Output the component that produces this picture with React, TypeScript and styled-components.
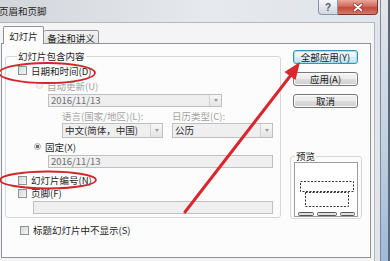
import React from 'react';
import styled, { createGlobalStyle } from 'styled-components';

const GlobalStyle = createGlobalStyle`
  html, body {
    margin: 0;
    padding: 0;
    background: #f3f3f3;
  }
  body {
    font-family: "Noto Sans CJK SC", "Noto Sans", sans-serif;
    font-size: 9.5px;
    color: #1e1e1e;
  }
`;

const Screen = styled.div`
  position: relative;
  width: 390px;
  height: 261px;
  overflow: hidden;
  display: flex;
`;

const Window = styled.div`
  width: 381px;
  display: flex;
  flex-direction: column;
  background: linear-gradient(to right, #d2d6da, #e6e9ed 55%, #dfe5eb);
  border-right: 1px solid #7d8a98;
  box-sizing: border-box;
`;

const Backdrop = styled.div`
  flex: 1;
  background: linear-gradient(#e4e6e9, #c9d6e3 45%, #9dbad7);
  border-right: 2px solid #5a6878;
`;

const TitleBar = styled.div`
  height: 22px;
  display: flex;
  align-items: flex-start;
`;

const Title = styled.div`
  margin: 5px 0 0 -1px;
  line-height: 13px;
  color: #222;
`;

const Caption = styled.div`
  margin: 0 2px 0 auto;
  display: flex;
`;

const CaptionButton = styled.div<{ $close?: boolean }>`
  width: ${p => (p.$close ? 40 : 20)}px;
  height: 15px;
  box-sizing: border-box;
  display: flex;
  align-items: center;
  justify-content: center;
  border: 1px solid ${p => (p.$close ? '#7a3530' : '#8b96a3')};
  border-left-width: ${p => (p.$close ? 0 : 1)}px;
  border-radius: ${p => (p.$close ? '0 0 4px 0' : '0 0 0 4px')};
  border-top: none;
  background: ${p =>
    p.$close
      ? 'linear-gradient(#eaa79c, #d26a5c 45%, #c24a3b 55%, #d77a66)'
      : 'linear-gradient(#f6f8fa, #e3e7ec 50%, #d3d9e0)'};
  color: #4d5a6b;
  font-family: "Liberation Sans", sans-serif;
  font-size: 10px;
  font-weight: bold;
`;

const Client = styled.div`
  flex: 1;
  margin-right: 5px;
  background: #f4f4f4;
  border-top: 1px solid #b4b7bb;
  border-right: 1px solid #b4b7bb;
  padding: 3px 0 3px 1px;
  display: flex;
  flex-direction: column;
`;

const TabStrip = styled.div`
  height: 18px;
  display: flex;
  align-items: flex-end;
  padding-left: 2px;
  margin-bottom: -1px;
  position: relative;
  z-index: 1;
`;

const Tab = styled.div<{ $active?: boolean }>`
  height: ${p => (p.$active ? 18 : 14)}px;
  width: ${p => (p.$active ? 41 : 55)}px;
  box-sizing: border-box;
  border: 1px solid #8e9197;
  border-bottom: ${p => (p.$active ? 'none' : '1px solid #8e9197')};
  border-left-width: ${p => (p.$active ? 1 : 0)}px;
  border-radius: 2px 2px 0 0;
  background: ${p => (p.$active ? '#fcfcfc' : 'linear-gradient(#f3f3f3, #e4e4e4)')};
  display: flex;
  align-items: center;
  justify-content: center;
  line-height: 12px;
  padding-top: ${p => (p.$active ? 0 : 1)}px;
`;

const Panel = styled.div`
  flex: 1;
  margin-right: 3px;
  border: 1px solid #8e9197;
  background: #fcfcfc;
  display: flex;
`;

const LeftCol = styled.div`
  margin-left: 3px;
  width: 276px;
  display: flex;
  flex-direction: column;
`;

const Group = styled.fieldset<{ $pad: string }>`
  margin: 0;
  min-width: 0;
  padding: ${p => p.$pad};
  border: 1px solid #d3d8dc;
  border-radius: 3px;
  display: flex;
  flex-direction: column;
`;

const Legend = styled.legend<{ $ml: number }>`
  padding: 0 1px;
  margin-left: ${p => p.$ml}px;
  line-height: 12px;
  color: #1e1e1e;
`;

const Option = styled.div<{ $h: number; $mt?: number; $ml?: number; $muted?: boolean }>`
  height: ${p => p.$h}px;
  margin-top: ${p => p.$mt ?? 0}px;
  margin-left: ${p => p.$ml ?? 0}px;
  display: flex;
  align-items: center;
  line-height: 12px;
  white-space: nowrap;
  color: ${p => (p.$muted ? '#a3a3a3' : '#1e1e1e')};
`;

const Check = styled.span`
  width: 9px;
  height: 9px;
  box-sizing: border-box;
  border: 1px solid #8f9294;
  background: linear-gradient(135deg, #d4d6d8, #f6f7f8);
  margin-right: 4px;
  flex: none;
`;

const Radio = styled.span<{ $on?: boolean; $faint?: boolean }>`
  width: 7px;
  height: 7px;
  box-sizing: border-box;
  border-radius: 50%;
  border: 1px solid ${p => (p.$faint ? '#d8d8d8' : '#a9a9a9')};
  background: ${p =>
    p.$on ? 'radial-gradient(circle, #6c6c6c 0 1.4px, #eeeeee 1.9px)' : '#f4f4f4'};
  margin-right: 4px;
  flex: none;
`;

const Field = styled.div<{ $w: number; $ml: number; $mt?: number; $h?: number; $dark?: boolean }>`
  width: ${p => p.$w}px;
  height: ${p => p.$h ?? 13}px;
  margin-left: ${p => p.$ml}px;
  margin-top: ${p => p.$mt ?? 0}px;
  box-sizing: border-box;
  border: 1px solid #bdbfc2;
  background: #efefef;
  display: flex;
  align-items: center;
  padding-left: 2px;
  line-height: 11px;
  color: ${p => (p.$dark ? '#2a2a2a' : '#6e6e6e')};
  white-space: nowrap;
  flex: none;
`;

const FieldText = styled.span`
  flex: 1;
`;

const DropButton = styled.span`
  width: 12px;
  align-self: stretch;
  box-sizing: border-box;
  border-left: 1px solid #cfd1d3;
  background: linear-gradient(#f7f7f7, #e4e4e4);
  display: flex;
  align-items: center;
  justify-content: center;

  &::after {
    content: '';
    border-left: 2.5px solid transparent;
    border-right: 2.5px solid transparent;
    border-top: 3px solid #9a9a9a;
  }
`;

const Pair = styled.div<{ $h: number }>`
  height: ${p => p.$h}px;
  margin-left: 44px;
  display: flex;
  align-items: center;
  gap: 9px;
`;

const Caption2 = styled.span<{ $w?: number }>`
  width: ${p => (p.$w ? `${p.$w}px` : 'auto')};
  color: #a3a3a3;
  line-height: 12px;
  padding-top: 1px;
  white-space: nowrap;
`;

const RightCol = styled.div`
  margin-left: 9px;
  width: 72px;
  padding-top: 6px;
  display: flex;
  flex-direction: column;
`;

const Button = styled.div<{ $default?: boolean }>`
  margin-left: 3px;
  margin-bottom: 8px;
  width: 65px;
  height: 14px;
  box-sizing: border-box;
  border: 1px solid ${p => (p.$default ? '#3f8fb5' : '#767676')};
  border-radius: 3px;
  box-shadow: ${p => (p.$default ? 'inset 0 0 0 1px #9fe2f2' : 'inset 0 0 0 1px #fbfbfb')};
  background: ${p =>
    p.$default
      ? 'linear-gradient(#f3fafd, #e4f4fb 50%, #d2ecf8 50%, #c6e6f5)'
      : 'linear-gradient(#f4f4f4, #ebebeb 50%, #dddddd 50%, #d0d0d0)'};
  display: flex;
  align-items: center;
  justify-content: center;
  line-height: 12px;
  color: #1a1a1a;
`;

const PreviewGroup = styled(Group)`
  margin-top: 34px;
`;

const Thumb = styled.svg`
  display: block;
`;

const Overlay = styled.svg`
  position: absolute;
  left: 0;
  top: 0;
  pointer-events: none;
`;

export default function App() {
  return (
    <>
      <GlobalStyle />
      <Screen>
        <Window>
          <TitleBar>
            <Title>页眉和页脚</Title>
            <Caption>
              <CaptionButton>?</CaptionButton>
              <CaptionButton $close>
                <svg width="12" height="9" viewBox="0 0 12 9">
                  <path d="M2.5 1.5 L9.5 7.5 M9.5 1.5 L2.5 7.5" stroke="#7a2a24" strokeWidth="3" strokeLinecap="round" />
                  <path d="M2.5 1.5 L9.5 7.5 M9.5 1.5 L2.5 7.5" stroke="#ffffff" strokeWidth="1.8" strokeLinecap="round" />
                </svg>
              </CaptionButton>
            </Caption>
          </TitleBar>
          <Client>
            <TabStrip>
              <Tab $active>幻灯片</Tab>
              <Tab>备注和讲义</Tab>
            </TabStrip>
            <Panel>
              <LeftCol>
                <Group $pad="0 6px 3px 12px" style={{ marginTop: 6 }}>
                  <Legend $ml={-1}>幻灯片包含内容</Legend>
                  <Option $h={17}><Check />日期和时间(D)</Option>
                  <Option $h={13} $ml={18} $muted><Radio $faint />自动更新(U)</Option>
                  <Field $w={174} $ml={30} $mt={2}>
                    <FieldText>2016/11/13</FieldText>
                    <DropButton />
                  </Field>
                  <Pair $h={16}>
                    <Caption2 $w={101}>语言(国家/地区)(L):</Caption2>
                    <Caption2>日历类型(C):</Caption2>
                  </Pair>
                  <Pair $h={15}>
                    <Field $w={101} $ml={0} $h={15} $dark>
                      <FieldText>中文(简体，中国)</FieldText>
                      <DropButton />
                    </Field>
                    <Field $w={101} $ml={0} $h={15} $dark>
                      <FieldText>公历</FieldText>
                      <DropButton />
                    </Field>
                  </Pair>
                  <Option $h={17} $ml={16}><Radio $on />固定(X)</Option>
                  <Field $w={225} $ml={30}>
                    <FieldText>2016/11/13</FieldText>
                  </Field>
                  <Option $h={14} $mt={5}><Check />幻灯片编号(N)</Option>
                  <Option $h={12}><Check />页脚(F)</Option>
                  <Field $w={240} $ml={15} $mt={2} />
                </Group>
                <Option $h={14} $mt={5} $ml={15}><Check />标题幻灯片中不显示(S)</Option>
              </LeftCol>
              <RightCol>
                <Button $default>全部应用(Y)</Button>
                <Button>应用(A)</Button>
                <Button>取消</Button>
                <PreviewGroup $pad="0 3px 1px 3px">
                  <Legend $ml={1}>预览</Legend>
                  <Thumb width="64" height="55" viewBox="0 0 64 55">
                    <rect x="0.5" y="0.5" width="63" height="54" fill="#ffffff" stroke="#9c9c9c" />
                    <g fill="none" stroke="#333" strokeWidth="1" strokeDasharray="2 1.5">
                      <rect x="6.5" y="19.5" width="53" height="10" />
                      <rect x="11.5" y="30.5" width="43" height="14" />
                    </g>
                    <g fill="#e2e2e2" stroke="#555" strokeWidth="1">
                      <rect x="4.5" y="50.5" width="15" height="3" rx="1" />
                      <rect x="23.5" y="50.5" width="19" height="3" rx="1" />
                      <rect x="46.5" y="50.5" width="14" height="3" rx="1" />
                    </g>
                  </Thumb>
                </PreviewGroup>
              </RightCol>
            </Panel>
          </Client>
        </Window>
        <Backdrop />
        <Overlay width="390" height="261" viewBox="0 0 390 261">
          <g fill="none" stroke="#d2262c" strokeWidth="1.8">
            <ellipse cx="47" cy="73" rx="48" ry="10" />
            <ellipse cx="48" cy="180" rx="48" ry="8.5" />
          </g>
          <line x1="185" y1="212" x2="291" y2="75" stroke="#d8272d" strokeWidth="3" strokeLinecap="round" />
          <polygon points="300,62 295.5,80 284.5,72" fill="#d8272d" />
        </Overlay>
      </Screen>
    </>
  );
}
